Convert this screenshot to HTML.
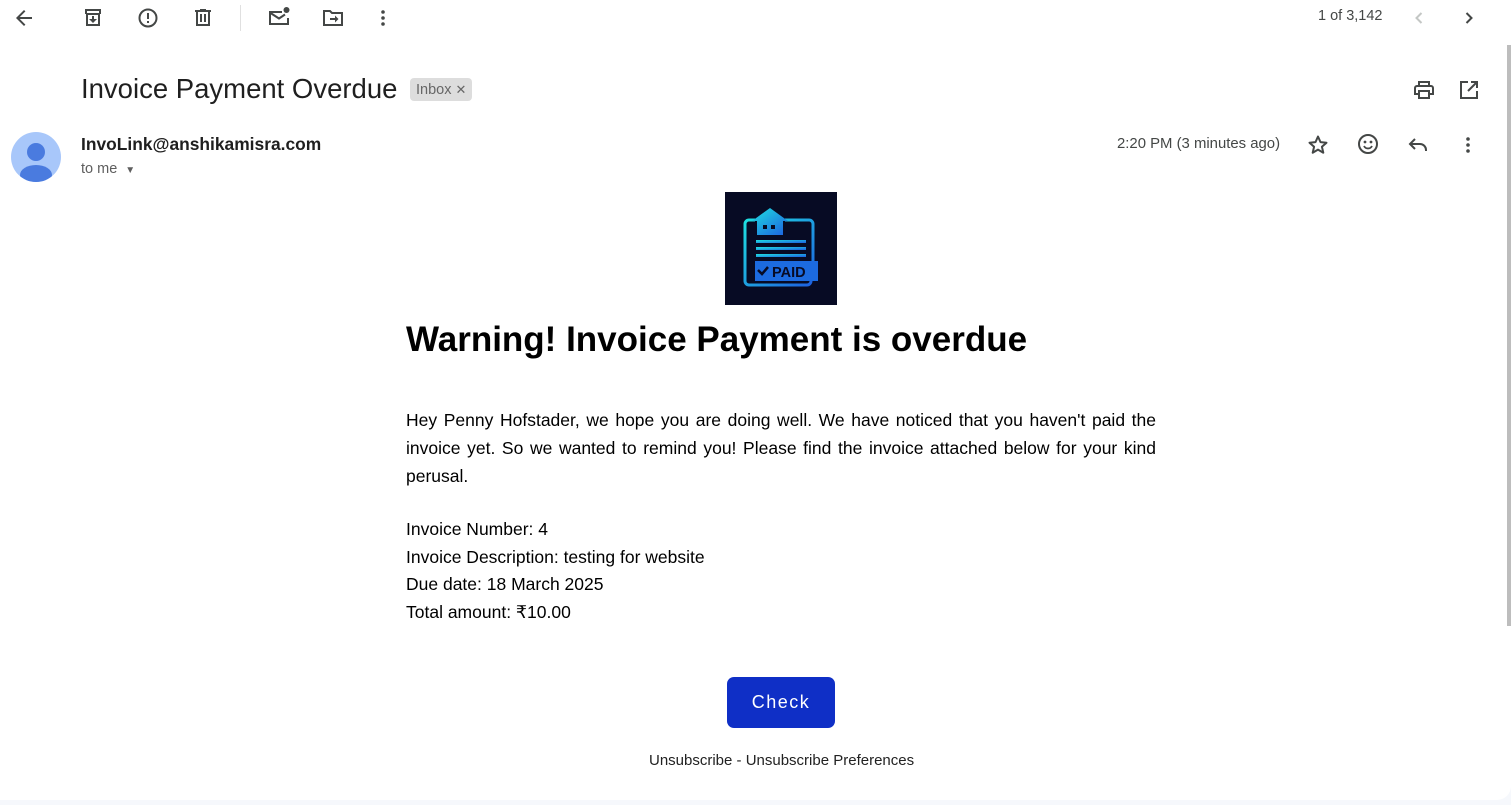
<!DOCTYPE html>
<html><head><meta charset="utf-8"><style>
*{margin:0;padding:0;box-sizing:border-box}
body{width:1511px;height:805px;background:#f6f8fc;font-family:"Liberation Sans",Arial,sans-serif;position:relative;overflow:hidden}
.main{position:absolute;left:0;top:0;width:1511px;height:800px;background:#fff;border-bottom-right-radius:14px}
.ic{position:absolute}
.ic svg{display:block}
.sb{position:absolute;left:1507px;top:45px;width:4px;height:581px;background:#bdbdbd}
.t{position:absolute;white-space:nowrap}
</style></head><body><div class="main">
<svg class="ic" style="left:12px;top:6px" width="24" height="24" viewBox="0 0 24 24"><path d="M20 11H7.8l5.6-5.6L12 4l-8 8 8 8 1.4-1.4L7.8 13H20z" fill="#444746"/></svg>
<svg class="ic" style="left:81px;top:6px" width="24" height="24" viewBox="0 0 24 24"><path d="M20 3H4v5h1v12h14V8h1zM6 5h12v2H6zm11 13H7V9h10zm-5-1l4-4h-3v-3h-2v3H8z" fill="#444746"/></svg>
<svg class="ic" style="left:136px;top:6px" width="24" height="24" viewBox="0 0 24 24"><circle cx="12" cy="12" r="8.5" fill="none" stroke="#444746" stroke-width="2"/><rect x="11" y="7" width="2" height="6" fill="#444746"/><rect x="11" y="15" width="2" height="2" fill="#444746"/></svg>
<svg class="ic" style="left:191px;top:6px" width="24" height="24" viewBox="0 0 24 24"><path d="M15 4V3H9v1H4v2h1v14h14V6h1V4zm2 14H7V6h10zM9 8h2v8H9zm4 0h2v8h-2z" fill="#444746"/></svg>
<div style="position:absolute;left:240px;top:5px;width:1px;height:26px;background:#e0e0e0"></div>
<svg class="ic" style="left:266px;top:5px" width="26" height="24" viewBox="0 0 26 24"><path d="M16 7H4v12h18v-6" fill="none" stroke="#444746" stroke-width="2"/><path d="M4.5 8l8.5 5.5 6-4" fill="none" stroke="#444746" stroke-width="2"/><circle cx="20.5" cy="5" r="3" fill="#444746"/></svg>
<svg class="ic" style="left:321px;top:6px" width="24" height="24" viewBox="0 0 24 24"><path d="M3 5h6l2 2h10v12H3z" fill="none" stroke="#444746" stroke-width="2"/><path d="M9 12h5v-2.5l3.5 3.5-3.5 3.5V14H9z" fill="#444746"/></svg>
<svg class="ic" style="left:371px;top:6px" width="24" height="24" viewBox="0 0 24 24"><circle cx="12" cy="6" r="1.8" fill="#444746"/><circle cx="12" cy="12" r="1.8" fill="#444746"/><circle cx="12" cy="18" r="1.8" fill="#444746"/></svg>
<div class="t" style="left:1318px;top:8px;font-size:14.5px;color:#444746">1 of 3,142</div>
<svg class="ic" style="left:1407px;top:6px" width="24" height="24" viewBox="0 0 24 24"><path d="M14.5 7l-5 5 5 5" fill="none" stroke="#c4c7c5" stroke-width="2"/></svg>
<svg class="ic" style="left:1457px;top:6px" width="24" height="24" viewBox="0 0 24 24"><path d="M9.5 7l5 5-5 5" fill="none" stroke="#444746" stroke-width="2"/></svg>
<div class="sb"></div>
<div class="t" style="left:81px;top:73px;font-size:27.5px;color:#1f1f1f">Invoice Payment Overdue</div>
<div class="t" style="left:410px;top:78px;height:23px;padding:0 6px;background:#ddd;border-radius:4px;font-size:14.5px;line-height:23px;color:#666">Inbox <span style="font-size:13px">✕</span></div>
<svg class="ic" style="left:1412px;top:78px" width="24" height="24" viewBox="0 0 24 24"><path d="M7 8V4h10v4M5 8h14a2 2 0 0 1 2 2v6h-4M7 16H3v-6a2 2 0 0 1 2-2M7 13h10v7H7z" fill="none" stroke="#444746" stroke-width="2"/></svg>
<svg class="ic" style="left:1457px;top:78px" width="24" height="24" viewBox="0 0 24 24"><path d="M11 4H4v16h16v-7M14 4h6v6M20 4l-9 9" fill="none" stroke="#444746" stroke-width="2"/></svg>
<svg class="ic" style="left:11px;top:132px" width="50" height="50" viewBox="0 0 50 50"><defs><clipPath id="c"><circle cx="25" cy="25" r="25"/></clipPath></defs><circle cx="25" cy="25" r="25" fill="#a8c7fa"/><g clip-path="url(#c)"><circle cx="25" cy="20" r="9" fill="#4a7bdf"/><ellipse cx="25" cy="43" rx="16" ry="10" fill="#4a7bdf"/></g></svg>
<div class="t" style="left:81px;top:134px;font-size:17.4px;font-weight:bold;color:#1f1f1f">InvoLink@anshikamisra.com</div>
<div class="t" style="left:81px;top:161px;font-size:14.5px;color:#5e5e5e">to me <span style="font-size:10px;margin-left:4px">▼</span></div>
<div class="t" style="left:1117px;top:136px;font-size:14.9px;color:#444746">2:20 PM (3 minutes ago)</div>
<svg class="ic" style="left:1306px;top:133px" width="24" height="24" viewBox="0 0 24 24"><path d="M12 3.5l2.5 5.6 6 .6-4.6 4 1.4 6L12 16.6l-5.3 3.1 1.4-6-4.6-4 6-.6z" fill="none" stroke="#444746" stroke-width="2" stroke-linejoin="round"/></svg>
<svg class="ic" style="left:1356px;top:132px" width="24" height="24" viewBox="0 0 24 24"><circle cx="12" cy="12" r="9" fill="none" stroke="#444746" stroke-width="2"/><circle cx="9" cy="10" r="1.4" fill="#444746"/><circle cx="15" cy="10" r="1.4" fill="#444746"/><path d="M8 14a4.5 4.5 0 0 0 8 0" fill="none" stroke="#444746" stroke-width="1.8"/></svg>
<svg class="ic" style="left:1406px;top:133px" width="24" height="24" viewBox="0 0 24 24"><path d="M9 6l-5 5 5 5M4 11h10a6 6 0 0 1 6 6v1" fill="none" stroke="#444746" stroke-width="2"/></svg>
<svg class="ic" style="left:1456px;top:133px" width="24" height="24" viewBox="0 0 24 24"><circle cx="12" cy="6" r="1.8" fill="#444746"/><circle cx="12" cy="12" r="1.8" fill="#444746"/><circle cx="12" cy="18" r="1.8" fill="#444746"/></svg>
<svg class="ic" style="left:725px;top:192px" width="112" height="113" viewBox="0 0 112 113"><defs><linearGradient id="g" x1="0" y1="0" x2="1" y2="1"><stop offset="0" stop-color="#1ee0e0"/><stop offset="1" stop-color="#1d5fe0"/></linearGradient></defs>
<rect width="112" height="113" fill="#070b24"/>
<path d="M30 28h-6a4 4 0 0 0-4 4v57a4 4 0 0 0 4 4h58a4 4 0 0 0 4-4v-1M60 28h24a4 4 0 0 1 4 4v37" fill="none" stroke="url(#g)" stroke-width="3"/>
<path d="M45 16l18 13h-5v14H32V29h-5z" fill="url(#g)"/>
<rect x="38" y="33" width="4" height="4" fill="#070b24"/><rect x="46" y="33" width="4" height="4" fill="#070b24"/>
<rect x="31" y="48" width="50" height="3" fill="url(#g)"/><rect x="31" y="55" width="50" height="3" fill="url(#g)"/><rect x="31" y="62" width="50" height="3" fill="url(#g)"/>
<rect x="30" y="69" width="63" height="20" fill="#1c6be0"/>
<path d="M33 78l4 4 6-7" fill="none" stroke="#070b24" stroke-width="2.5"/>
<text x="47" y="85" font-family="Liberation Sans" font-weight="bold" font-size="14.5" fill="#070b24">PAID</text></svg>
<div class="t" style="left:406px;top:320px;font-size:35px;font-weight:bold;color:#000">Warning! Invoice Payment is overdue</div>
<div style="position:absolute;left:406px;top:406px;width:750px;font-size:17.5px;line-height:28px;color:#000;text-align:justify">Hey Penny Hofstader, we hope you are doing well. We have noticed that you haven't paid the invoice yet. So we wanted to remind you! Please find the invoice attached below for your kind perusal.</div>
<div style="position:absolute;left:406px;top:516px;font-size:17.5px;line-height:27.5px;color:#000">Invoice Number: 4<br>Invoice Description: testing for website<br>Due date: 18 March 2025<br>Total amount: ₹10.00</div>
<div style="position:absolute;left:727px;top:677px;width:108px;height:51px;background:#0f2fc6;border-radius:7px;color:#fff;font-size:18px;letter-spacing:1.5px;text-align:center;line-height:51px">Check</div>
<div class="t" style="left:649px;top:752px;font-size:15px;color:#222">Unsubscribe - Unsubscribe Preferences</div>
</div></body></html>
